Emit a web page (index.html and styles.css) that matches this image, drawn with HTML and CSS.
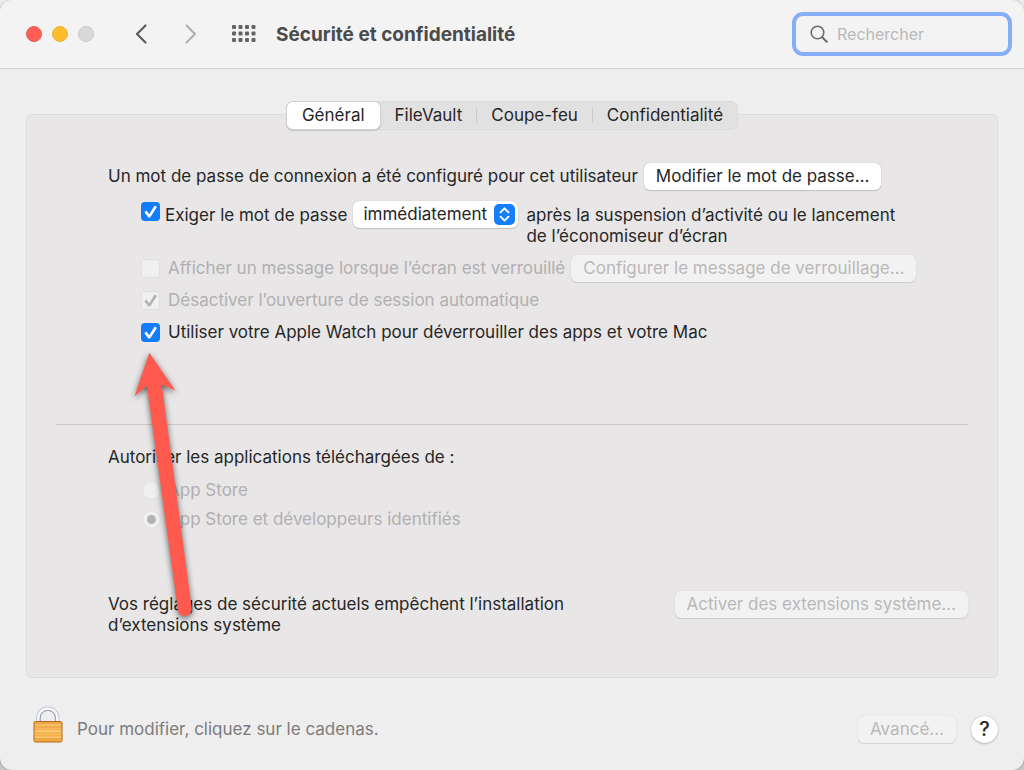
FILE: index.html
```html
<!DOCTYPE html>
<html lang="fr">
<head>
    <meta charset="UTF-8">
    <meta name="viewport" content="width=device-width, initial-scale=1">
    <title>Sécurité et confidentialité</title>
    <link rel="stylesheet" href="styles.css">
</head>
<body>

    <div class="window">
        <header class="toolbar">
            <div class="lights">
                <button type="button" class="light red" aria-label="Fermer"></button>
                <button type="button" class="light yellow" aria-label="Réduire"></button>
                <button type="button" class="light" aria-label="Agrandir" disabled></button>
            </div>
            <div class="nav">
                <button type="button" class="icon-btn" aria-label="Précédent">
                    <svg width="14" height="22" viewBox="0 0 14 22"><path d="M11.5 2.5 3 11l8.500 8.500" fill="none" stroke="#5c5c5c" stroke-width="2.200" stroke-linecap="round" stroke-linejoin="round"/></svg>
                </button>
                <button type="button" class="icon-btn" aria-label="Suivant" disabled>
                    <svg width="14" height="22" viewBox="0 0 14 22"><path d="M2.500 2.500 11 11l-8.500 8.500" fill="none" stroke="#b0b0b0" stroke-width="2.200" stroke-linecap="round" stroke-linejoin="round"/></svg>
                </button>
            </div>
            <button type="button" class="icon-btn" aria-label="Tout afficher">
                <svg width="24" height="18" viewBox="0 0 24 18" fill="#636363">
                    <rect x="0" y="0" width="4" height="4" rx="1"/><rect x="6.500" y="0" width="4" height="4" rx="1"/><rect x="13" y="0" width="4" height="4" rx="1"/><rect x="19.500" y="0" width="4" height="4" rx="1"/>
                    <rect x="0" y="6.500" width="4" height="4" rx="1"/><rect x="6.500" y="6.500" width="4" height="4" rx="1"/><rect x="13" y="6.500" width="4" height="4" rx="1"/><rect x="19.500" y="6.500" width="4" height="4" rx="1"/>
                    <rect x="0" y="13" width="4" height="4" rx="1"/><rect x="6.500" y="13" width="4" height="4" rx="1"/><rect x="13" y="13" width="4" height="4" rx="1"/><rect x="19.500" y="13" width="4" height="4" rx="1"/>
                </svg>
            </button>
            <h1>Sécurité et confidentialité</h1>
            <label class="search">
                <svg width="18" height="18" viewBox="0 0 18 18" fill="none" stroke="#6a6a6a" stroke-linecap="round"><circle cx="7.500" cy="7.500" r="6.300" stroke-width="1.600"/><path d="m12.200 12.200 4.500 4.500" stroke-width="2"/></svg>
                <input type="search" placeholder="Rechercher" aria-label="Rechercher">
            </label>
        </header>

        <main>
            <div class="tabs" role="tablist">
                <button type="button" role="tab" class="tab active" aria-selected="true">Général</button>
                <button type="button" role="tab" class="tab">FileVault</button>
                <button type="button" role="tab" class="tab">Coupe-feu</button>
                <button type="button" role="tab" class="tab">Confidentialité</button>
            </div>

            <div class="panel">
                <section class="login">
                    <div class="row">
                        <span>Un mot de passe de connexion a été configuré pour cet utilisateur</span>
                        <button type="button" class="btn">Modifier le mot de passe…</button>
                    </div>

                    <div class="row indent top tight">
                        <input type="checkbox" id="require" checked>
                        <label for="require">Exiger le mot de passe</label>
                        <div class="select">
                            <select aria-label="Délai">
                                <option>immédiatement</option>
                            </select>
                            <svg width="21" height="21" viewBox="0 0 21 21"><rect width="21" height="21" rx="5" fill="#147efb"/><path d="m6.500 8.300 4-4 4 4M6.500 12.700l4 4 4-4" fill="none" stroke="#fff" stroke-width="1.900" stroke-linecap="round" stroke-linejoin="round"/></svg>
                        </div>
                        <p>après la suspension d’activité ou le lancement<br>de l’économiseur d’écran</p>
                    </div>

                    <div class="row indent tight">
                        <input type="checkbox" id="message" disabled>
                        <label for="message">Afficher un message lorsque l’écran est verrouillé</label>
                        <button type="button" class="btn" disabled>Configurer le message de verrouillage…</button>
                    </div>

                    <div class="row indent">
                        <input type="checkbox" id="autologin" checked disabled>
                        <label for="autologin">Désactiver l’ouverture de session automatique</label>
                    </div>

                    <div class="row indent">
                        <input type="checkbox" id="watch" checked>
                        <label for="watch">Utiliser votre Apple Watch pour déverrouiller des apps et votre Mac</label>
                    </div>
                </section>

                <section class="downloads">
                    <p>Autoriser les applications téléchargées de :</p>
                    <div class="row indent tight">
                        <input type="radio" name="source" id="store" disabled>
                        <label for="store">App Store</label>
                    </div>
                    <div class="row indent">
                        <input type="radio" name="source" id="identified" checked disabled>
                        <label for="identified">App Store et développeurs identifiés</label>
                    </div>
                </section>

                <section class="extensions">
                    <p>Vos réglages de sécurité actuels empêchent l’installation<br>d’extensions système</p>
                    <button type="button" class="btn" disabled>Activer des extensions système…</button>
                </section>
            </div>
        </main>

        <footer>
            <button type="button" class="icon-btn" aria-label="Cadenas">
                <svg width="30" height="38" viewBox="0 0 30 38">
                    <defs>
                        <linearGradient id="gold" x1="0" y1="0" x2="0" y2="1">
                            <stop offset="0" stop-color="#e9a343"/>
                            <stop offset=".5" stop-color="#ffc45f"/>
                            <stop offset="1" stop-color="#f2a63c"/>
                        </linearGradient>
                    </defs>
                    <path d="M5.400 17V13a9.400 9.400 0 0 1 18.800 0V17" fill="none" stroke="#b4bac2" stroke-width="4.200"/>
                    <path d="M5.400 17V13a9.400 9.400 0 0 1 18.800 0V17" fill="none" stroke="#f3f6fa" stroke-width="2.800"/>
                    <path d="M7.200 16V13a7.600 7.600 0 0 1 15.200 0V16" fill="none" stroke="#8e959e" stroke-width=".9"/>
                    <rect x="1" y="16.500" width="28" height="20.500" rx="1.500" fill="url(#gold)" stroke="#b5651d"/>
                    <path d="M2 19h26M2 22h26M2 25h26M2 28h26M2 31h26M2 34h26" stroke="#e09a3c" stroke-width=".6"/>
                    <path d="M2 20h26M2 26h26M2 32h26" stroke="#ffd98d" stroke-width=".8"/>
                </svg>
            </button>
            <span class="hint">Pour modifier, cliquez sur le cadenas.</span>
            <button type="button" class="btn" disabled>Avancé…</button>
            <button type="button" class="help" aria-label="Aide">?</button>
        </footer>

        <svg class="arrow" width="80" height="280" viewBox="0 0 80 280" aria-hidden="true">
            <path d="M29.300 8.700 55.300 46.500 41.700 40.700 71.700 264a6.900 6.900 0 0 1-13.700 2.200L27 42 14.700 52Z" fill="#ff5a4d"/>
        </svg>
    </div>

</body>
</html>
```
FILE: styles.css
```css
* {
    box-sizing: border-box;
}

body {
    margin: 0;
    background: linear-gradient(#ededed, #c8c8c8);
    color: #262626;
    font-family: Inter, "Liberation Sans", sans-serif;
    font-size: 17px;
    line-height: 21px;
}

button, input, select {
    font: inherit;
    color: inherit;
    margin: 0;
}

p {
    margin: 0;
}

.window {
    position: relative;
    min-height: 100vh;
    background-color: #eee;
    border-radius: 12px;
    box-shadow: 0 0 2px rgba(0,0,0,0.4);
    overflow: hidden;
}

/* Toolbar */
.toolbar {
    display: flex;
    align-items: center;
    height: 69px;
    padding: 0 12px 0 26px;
    background-color: #f3f3f3;
    border-bottom: 1px solid #d3d2d3;
}

.lights {
    display: flex;
    gap: 10px;
    margin-right: 40px;
}

.light {
    width: 16px;
    height: 16px;
    padding: 0;
    border: 1px solid #c9c7c9;
    border-radius: 50%;
    background-color: #d9d7d9;
}

.light.red {
    background-color: #ff5f57;
    border-color: #ec5850;
}

.light.yellow {
    background-color: #febc2e;
    border-color: #eeb02c;
}

.nav {
    display: flex;
    gap: 36px;
    margin-right: 34px;
}

.icon-btn {
    display: flex;
    padding: 0;
    border: none;
    background: none;
}

h1 {
    flex: 1;
    margin: 0 0 0 20px;
    font-size: 19px;
    font-weight: 700;
    color: #4b4b4b;
}

.search {
    display: flex;
    align-items: center;
    gap: 9px;
    width: 220px;
    height: 44px;
    padding: 0 14px;
    border: 4px solid #86adf7;
    border-radius: 11px;
    font-size: 16px;
}

.search input {
    flex: 1;
    min-width: 0;
    padding: 0;
    border: none;
    outline: none;
    background: none;
}

.search input::placeholder {
    color: #b9b9b9;
}

/* Tabs sit across the top edge of the panel */
main {
    padding: 32px 26px 0;
}

.tabs {
    position: relative;
    z-index: 1;
    display: flex;
    width: fit-content;
    height: 29px;
    margin: 0 auto -16px;
    border: 1px solid #dbdadb;
    border-radius: 7px;
    background-color: #e2e1e2;
}

.tab {
    display: flex;
    align-items: center;
    padding: 0 14px;
    border: none;
    background: none;
}

.tab + .tab + .tab::before {
    content: "";
    width: 1px;
    height: 15px;
    margin: 0 14px 0 -14px;
    background-color: #cbcacb;
}

.tab.active {
    margin: -1px 0 -1px -1px;
    padding: 0 15px;
    border: 1px solid #d0cfd0;
    border-radius: 7px;
    background-color: #fff;
    box-shadow: 0 1px 1px rgba(0,0,0,0.15);
}

.panel {
    padding: 0 29px 41px;
    border: 1px solid #dddcdd;
    border-radius: 6px;
    background-color: #e8e6e7;
}

.row {
    display: flex;
    align-items: center;
    margin-bottom: 11px;
}

.row.top {
    align-items: flex-start;
}

.row.tight {
    margin-bottom: 8px;
}

.indent {
    padding-left: 33px;
}

.row .btn {
    margin-left: 6px;
}

/* Controls */
.btn {
    height: 27px;
    padding: 0 12px;
    border: none;
    border-radius: 6px;
    background-color: #fff;
    box-shadow: 0 0 1px rgba(0,0,0,0.3), 0 1px 1px rgba(0,0,0,0.15);
    white-space: nowrap;
}

.btn:disabled {
    background-color: #f3f2f3;
    box-shadow: 0 0 1px rgba(0,0,0,0.15), 0 1px 1px rgba(0,0,0,0.1);
    color: #b9b8b9;
}

input[type="checkbox"], input[type="radio"] {
    appearance: none;
    position: relative;
    flex: none;
    width: 19px;
    height: 19px;
    margin-right: 8px;
    border-radius: 4px;
    background-color: #f1f0f1;
    box-shadow: inset 0 0 1px 1px #dfdedf;
}

input[type="checkbox"]:checked:enabled {
    background-color: #127cfb;
    box-shadow: none;
}

input[type="checkbox"]:checked::after {
    content: "";
    position: absolute;
    inset: 0;
    background-color: #fff;
    clip-path: polygon(18% 54%, 28% 45%, 43% 64%, 72% 18%, 84% 26%, 48% 82%, 39% 82%);
}

input[type="checkbox"]:checked:disabled::after {
    background-color: #b4b3b4;
}

input[type="radio"] {
    margin: 0 7px 0 1px;
    border-radius: 50%;
}

input[type="radio"]:checked::after {
    content: "";
    position: absolute;
    inset: 5px;
    border-radius: 50%;
    background-color: #b4b3b4;
}

input:disabled + label {
    color: #b1b0b1;
}

.row.top > input {
    margin: 1px 5px 0 0;
}

.row.top > label, .row.top > p {
    margin-top: 4px;
}

.select {
    position: relative;
    margin: 0 8px 0 6px;
}

.select select {
    appearance: none;
    display: block;
    height: 27px;
    padding: 0 31px 0 10px;
    border: none;
    border-radius: 6px;
    background-color: #fff;
    box-shadow: 0 0 1px rgba(0,0,0,0.3), 0 1px 1px rgba(0,0,0,0.15);
}

.select svg {
    position: absolute;
    top: 3px;
    right: 3px;
    pointer-events: none;
}

/* Sections */
.login {
    padding: 48px 0 70px 52px;
    border-bottom: 1px solid #c9c8c9;
}

.downloads {
    padding: 22px 0 50px 52px;
}

.downloads p {
    margin-bottom: 12px;
}

.extensions {
    display: flex;
    justify-content: space-between;
    align-items: flex-start;
    padding-left: 52px;
}

.extensions p {
    margin-top: 3px;
}

footer {
    display: flex;
    align-items: flex-end;
    padding: 27px 26px 27px 33px;
}

.hint {
    flex: 1;
    margin-left: 14px;
    line-height: 27px;
    color: #7c7c7c;
}

.help {
    width: 27px;
    height: 27px;
    margin-left: 15px;
    padding: 0;
    border: none;
    border-radius: 50%;
    background-color: #fff;
    box-shadow: 0 0 1px rgba(0,0,0,0.3), 0 1px 2px rgba(0,0,0,0.2);
    font-size: 20px;
    font-weight: 500;
}

.arrow {
    position: absolute;
    left: 120px;
    top: 344px;
    filter: drop-shadow(0 2px 3px rgba(0,0,0,0.6));
    pointer-events: none;
}
```
